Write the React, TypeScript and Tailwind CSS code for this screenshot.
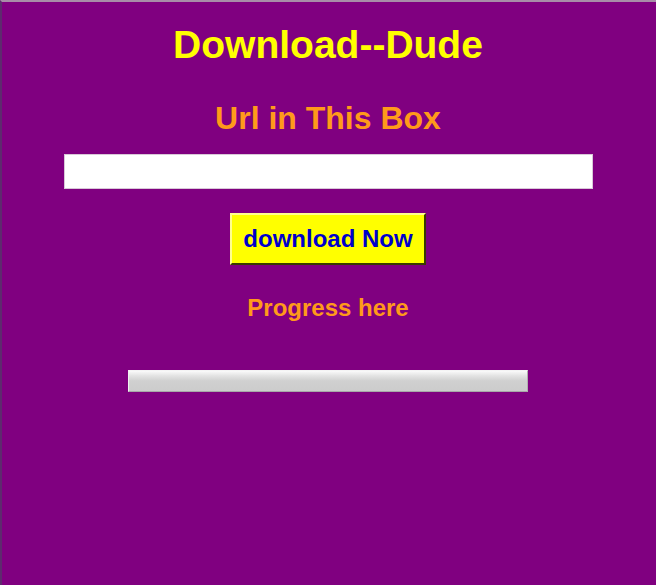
import React from "react";

export default function App() {
  return (
    <div
      className="min-h-[585px] w-full bg-[#800080] border-t-2 border-t-[#a88ca8] border-l-2 border-l-[#5e2a6e] pr-[2px] flex flex-col items-center"
      style={{ fontFamily: '"Liberation Sans", Arial, sans-serif' }}
    >
      <h1 className="mt-[20px] text-[39px] leading-[45px] font-bold text-[#ffff00]">
        Download--Dude
      </h1>
      <h2 className="mt-[33px] text-[32px] leading-[37px] font-bold text-[#ff9a1a]">
        Url in This Box
      </h2>
      <input
        type="text"
        className="mt-[17px] w-[529px] h-[35px] bg-white border border-[#d8c8d8] outline-none px-1 text-base"
      />
      <button
        type="button"
        className="mt-[24px] w-[196px] h-[52px] bg-[#ffff00] border-2 border-t-[#ffff90] border-l-[#ffff90] border-r-[#3a3a00] border-b-[#3a3a00] text-[24px] leading-[28px] font-bold text-[#0000cc]"
      >
        download Now
      </button>
      <p className="mt-[29px] text-[24px] leading-[28px] font-bold text-[#ff9a1a]">
        Progress here
      </p>
      <div className="mt-[48px] w-[400px] h-[22px] border border-t-[#f4f4f4] border-l-[#f0f0f0] border-r-[#b0b0b0] border-b-[#a8a8a8] bg-[linear-gradient(to_bottom,#fafafa_0%,#e2e2e2_25%,#d0d0d0_50%,#cccccc_100%)]" />
    </div>
  );
}
